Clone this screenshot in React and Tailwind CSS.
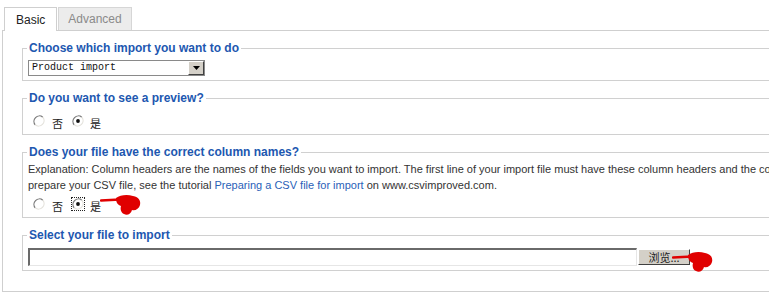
import React from "react";

// classic windows-style radio
const Radio = ({ checked }) => (
    <svg width="12" height="12" viewBox="0 0 12 12" className="shrink-0">
        <circle cx="6" cy="6" r="5" fill="#fff" />
        <path d="M2.2 9.8 A5.4 5.4 0 0 1 9.8 2.2" stroke="#7a7a7a" strokeWidth="1.2" fill="none" />
        <path d="M9.8 2.2 A5.4 5.4 0 0 1 2.2 9.8" stroke="#e4e2dc" strokeWidth="1.2" fill="none" />
        {checked && <circle cx="6" cy="6" r="1.9" fill="#111" />}
    </svg>
);

// red hand-drawn pointer
const Pointer = ({ className }) => (
    <svg width="42" height="22" viewBox="0 0 42 22" className={className}>
        <path d="M1 6.5 L20 5.5" stroke="#e00000" strokeWidth="2.4" strokeLinecap="round" />
        <path
            d="M16 4 C20 1 27 0 33 2 C39 3 41 7 40 11 C39 15 35 17 32 16 C31 20 27 22 24 20 C21 19 20 15 21 12 C18 11 16 9 16 4 Z"
            fill="#e00000"
        />
    </svg>
);

const YesNo = ({ focus, pointer }) => (
    <div className="relative flex items-center h-4 text-[11px] text-[#222]">
        <span className="ml-[5px]"><Radio /></span>
        <span className="ml-[7px] font-['Noto_Sans_CJK_SC',sans-serif] leading-none mt-[4px]">否</span>
        <span className={`ml-[8px] flex items-center justify-center w-[14px] h-[14px] ${focus ? 'border border-dotted border-[#222]' : ''}`}>
            <Radio checked />
        </span>
        <span className="ml-[5px] font-['Noto_Sans_CJK_SC',sans-serif] leading-none mt-[4px]">是</span>
        {pointer && <Pointer className="absolute left-[72px] top-[-2px]" />}
    </div>
);

const Section = ({ title, className = '', children }) => (
    <fieldset className={`border border-[#d0d0d0] pl-[5px] ${className}`}>
        <legend className="-ml-[1px] px-[2px] text-[12px] leading-4 font-bold text-[#2157b0]">
            {title}
        </legend>
        {children}
    </fieldset>
);

export default function App() {
    return (
        <div className="w-full h-[302px] overflow-hidden bg-white font-['Liberation_Sans',Arial,sans-serif]">
            <div className="w-[1000px]">
                {/* Tabs */}
                <div className="flex items-end pt-[6px] pl-[4px] gap-[1px] text-[12px]">
                    <div className="h-[24px] px-[11px] flex items-center border border-b-0 border-[#cfcfcf] bg-white text-[#222] relative top-[1px]">
                        Basic
                    </div>
                    <div className="h-[23px] px-[9px] flex items-center border border-b-0 border-[#d6d6d6] bg-[#ececec] text-[#8a8a8a]">
                        Advanced
                    </div>
                </div>

                {/* Panel */}
                <div className="ml-[2px] border border-[#cfcfcf] pt-[9px] pb-[20px] pl-[19px] flex flex-col gap-[9px]">
                    <Section title="Choose which import you want to do" className="pt-[4px] pb-[4px]">
                        <div className="flex items-center w-[177px] h-[16px] border border-[#8a8a8a] bg-white">
                            <span className="flex-1 pl-[3px] text-[10px] font-['Liberation_Mono',monospace] text-[#111] leading-none">
                                Product import
                            </span>
                            <span className="w-[16px] h-[14px] flex items-center justify-center bg-[#d4d0c8] border border-t-white border-l-white border-b-[#404040] border-r-[#404040]">
                                <svg width="7" height="4" viewBox="0 0 7 4"><path d="M0 0 H7 L3.5 4 Z" fill="#000" /></svg>
                            </span>
                        </div>
                    </Section>

                    <Section title="Do you want to see a preview?" className="pt-[7px] pb-[5px]">
                        <YesNo />
                    </Section>

                    <Section title="Does your file have the correct column names?" className="pt-[1px] pb-[5px]">
                        <div className="text-[11px] leading-4 text-[#333] whitespace-nowrap">
                            Explanation: Column headers are the names of the fields you want to import. The first line of your import file must have these column headers and the column names must be exactly as given in the list. To
                            <br />
                            prepare your CSV file, see the tutorial{' '}
                            <span className="text-[#2a5fb8]">Preparing a CSV file for import</span> on www.csvimproved.com.
                        </div>
                        <div className="mt-[3px]">
                            <YesNo focus pointer />
                        </div>
                    </Section>

                    <Section title="Select your file to import" className="pt-[5px] pb-[4px]">
                        <div className="relative flex items-center">
                            <div className="w-[609px] h-[18px] border-t-2 border-l-2 border-t-[#6a6a6a] border-l-[#6a6a6a] border-b border-r border-b-[#e6e6e6] border-r-[#e6e6e6] bg-white" />
                            <div className="ml-[1px] w-[52px] h-[16px] flex items-center justify-center bg-[#d4d0c8] border border-t-white border-l-white border-b-[#404040] border-r-[#404040] text-[11px] text-[#222] font-['Noto_Sans_CJK_SC',sans-serif] leading-none">
                                浏览...
                            </div>
                            <Pointer className="absolute left-[644px] top-[3px]" />
                        </div>
                    </Section>
                </div>
            </div>
        </div>
    );
}
